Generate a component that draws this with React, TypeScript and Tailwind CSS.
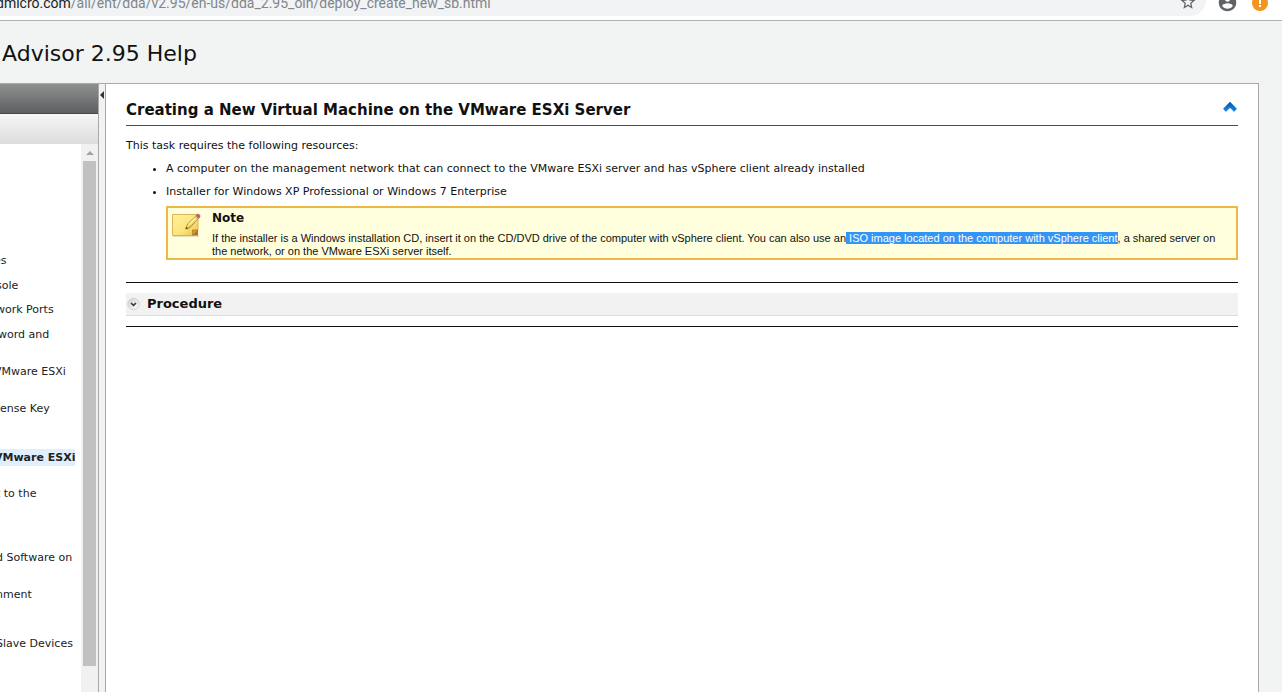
type Topic = { label: string; row: string; current?: boolean };

const topics: Topic[] = [
  { label: 'es', row: 'h-[25px] -ml-1.5' },
  { label: 'sole', row: 'h-[24px] -ml-1' },
  { label: 'work Ports', row: 'h-[25px] -ml-1' },
  { label: 'word and', row: 'h-[37px] -ml-0.5' },
  { label: 'VMware ESXi', row: 'h-[37px] -ml-1.5' },
  { label: 'ense Key', row: 'h-[49px]' },
  { label: 'VMware ESXi', row: 'h-[36px] -ml-1.5', current: true },
  { label: 't to the', row: 'h-[64px] -ml-1' },
  { label: 'd Software on', row: 'h-[37px] -ml-1' },
  { label: 'nment', row: 'h-[49px] -ml-1' },
  { label: 'Slave Devices', row: 'h-[25px] -ml-1' },
];

function StarIcon() {
  return (
    <svg width="18" height="18" viewBox="0 0 24 24" fill="#5f6368" aria-hidden="true">
      <path d="M22 9.24l-7.19-.62L12 2 9.19 8.63 2 9.24l5.46 4.73L5.82 21 12 17.27 18.18 21l-1.63-7.03L22 9.24zM12 15.4l-3.76 2.27 1-4.28-3.32-2.88 4.38-.38L12 6.1l1.71 4.04 4.38.38-3.32 2.88 1 4.28L12 15.4z" />
    </svg>
  );
}

function AccountIcon() {
  return (
    <svg width="21" height="21" viewBox="0 0 24 24" fill="#5f6368" aria-hidden="true">
      <path d="M12 2C6.48 2 2 6.48 2 12s4.48 10 10 10 10-4.48 10-10S17.52 2 12 2zm0 3c1.66 0 3 1.34 3 3s-1.34 3-3 3-3-1.34-3-3 1.34-3 3-3zm0 14.2c-2.5 0-4.71-1.28-6-3.22.03-1.99 4-3.08 6-3.08 1.99 0 5.97 1.09 6 3.08-1.29 1.94-3.5 3.22-6 3.22z" />
    </svg>
  );
}

function AlertIcon() {
  return (
    <svg width="16" height="16" viewBox="0 0 16 16" aria-hidden="true">
      <circle cx="8" cy="8" r="8" fill="#f29420" />
      <path d="M7 3h2v6H7zM7 10h2v2H7z" fill="#fff" />
    </svg>
  );
}

function NoteIcon() {
  return (
    <svg width="30" height="26" viewBox="0 0 30 26" aria-hidden="true">
      <defs>
        <linearGradient id="paper" x1="0" y1="0" x2="1" y2="1">
          <stop offset="0" stopColor="#fff2a0" />
          <stop offset="0.6" stopColor="#fbe477" />
          <stop offset="1" stopColor="#e9bd4c" />
        </linearGradient>
      </defs>
      <path d="M1 24h26" stroke="#a89a70" strokeOpacity="0.6" />
      <path d="M0.500 2.500h25.500v15.500l-5.500 5.500H0.500z" fill="url(#paper)" stroke="#dcb358" />
      <path d="M26 18l-5.500 5.500h5.500z" fill="#a87424" />
      <path d="M20.500 23.500v-5.500h5.500z" fill="#d89c35" stroke="#9c6a1f" strokeWidth="0.6" />
      <path d="M15 17.500l8-7.500" stroke="#b99a52" strokeWidth="2" strokeOpacity="0.6" />
      <path d="M13.500 17l2-5 8.500-8.200 2.700 2.600-8.300 8.300z" fill="#f8d860" stroke="#8f7436" strokeWidth="0.6" />
      <path d="M17 12.500l8-8" stroke="#fff4b4" strokeWidth="1.100" />
      <path d="M13.500 17l0.800-2.200 1.400 1.400z" fill="#4a4030" />
      <path d="M22.700 5l1.300-1.300 2.700 2.600-1.200 1.200z" fill="#b4b9be" />
      <path d="M24 3.600c1-1.500 2.400-1.700 3.400-.8 1 1 .8 2.300-.6 3.400z" fill="#e05560" stroke="#b8404c" strokeWidth="0.6" />
    </svg>
  );
}

function TopIcon() {
  return (
    <svg width="16" height="12" viewBox="0 0 16 12" aria-hidden="true">
      <defs>
        <linearGradient id="up" x1="0" y1="0" x2="0" y2="1">
          <stop offset="0" stopColor="#0b4fae" />
          <stop offset="1" stopColor="#0090f8" />
        </linearGradient>
      </defs>
      <path d="M8 1l6.500 6.800-2.300 2.600L8 6.500l-4.200 3.900-2.300-2.600z" fill="url(#up)" stroke="#1a62b0" strokeWidth="0.6" />
    </svg>
  );
}

function ExpandIcon() {
  return (
    <svg width="14" height="14" viewBox="0 0 14 14" aria-hidden="true">
      <defs>
        <linearGradient id="knob" x1="0" y1="0" x2="1" y2="1">
          <stop offset="0" stopColor="#d0d0d0" />
          <stop offset="1" stopColor="#ffffff" />
        </linearGradient>
      </defs>
      <circle cx="7.500" cy="7" r="5.700" fill="url(#knob)" stroke="#d2d2d2" />
      <path d="M5 6l2.500 2.300L10 6" fill="none" stroke="#3a3a3a" strokeWidth="1.600" />
    </svg>
  );
}

export default function App() {
  return (
    <div className="flex h-screen flex-col overflow-hidden bg-[#f2f4f3] font-['DejaVu_Sans',Verdana,sans-serif] text-[11px] text-[#111111]">
      <div className="flex h-[21px] shrink-0 items-start border-b border-[#b1b3b2] bg-white">
        <div className="flex h-4 min-w-0 flex-1 items-center justify-between rounded-br-2xl bg-[#f1f3f4] pr-[9px]">
          <div className="-ml-1 -mt-2.5 whitespace-nowrap font-[Roboto,sans-serif] text-[14px] leading-5 text-[#80868b]">
            <span className="text-[#202124]">dmicro.com</span>/all/ent/dda/v2.95/en-us/dda_2.95_olh/deploy_create_new_sb.html
          </div>
          <button type="button" aria-label="Bookmark this page" className="-mt-3">
            <StarIcon />
          </button>
        </div>
        <div className="-mt-2 flex items-center gap-[14px] pl-[11px] pr-[14px]">
          <button type="button" aria-label="Profile">
            <AccountIcon />
          </button>
          <button type="button" aria-label="Update available">
            <AlertIcon />
          </button>
        </div>
      </div>

      <header className="flex h-[62px] shrink-0 items-center pl-0.5 pt-1">
        <div className="text-[22px] leading-8">Advisor 2.95 Help</div>
      </header>

      <div className="mr-[23px] flex min-h-0 flex-1 border-r border-t border-[#a9a9a9]">
        <aside className="flex w-[99px] shrink-0 flex-col overflow-hidden border-r border-[#a9a9a9] bg-white">
          <div className="h-[30px] shrink-0 border-b border-[#44474d] bg-linear-to-b from-[#8f8f8f] to-[#5c6064]" />
          <div className="h-[30px] shrink-0 bg-linear-to-b from-[#f6f6f6] to-[#dcdcdc]" />
          <div className="flex min-h-0 flex-1">
            <nav className="min-w-0 flex-1 overflow-hidden pt-[108px]">
              <ul>
                {topics.map((topic, i) => (
                  <li key={i} className={`whitespace-nowrap leading-[17px] ${topic.row}`}>
                    <a
                      href="#topic"
                      className={topic.current ? 'inline-block bg-[#dfeffd] font-bold text-[#222222]' : 'inline-block text-[#222222]'}
                    >
                      {topic.label}
                    </a>
                  </li>
                ))}
              </ul>
            </nav>
            <div className="flex w-[17px] shrink-0 flex-col items-center bg-[#f1f1f1] pb-[26px]">
              <div className="flex h-[17px] shrink-0 items-center">
                <svg width="8" height="4" viewBox="0 0 8 4" aria-hidden="true">
                  <path d="M0 4l4-4 4 4z" fill="#a3a3a3" />
                </svg>
              </div>
              <div className="w-[13px] flex-1 bg-[#c1c1c1]" />
            </div>
          </div>
        </aside>

        <div className="w-[6px] shrink-0 bg-[#f2f2f2] pt-[7px]">
          <button type="button" aria-label="Hide contents" className="block">
            <svg width="6" height="8" viewBox="0 0 6 8" aria-hidden="true">
              <path d="M5 0v8L1 4z" fill="#333" />
            </svg>
          </button>
        </div>

        <main className="min-w-0 flex-1 border-l border-[#a9a9a9] bg-white px-5">
          <div className="flex h-[42px] items-end justify-between border-b border-[#ff0000] pb-[5px]">
            <h1 className="text-[15px] font-bold leading-5">Creating a New Virtual Machine on the VMware ESXi Server</h1>
            <a href="#top" aria-label="Back to top" className="block pb-[7px]">
              <TopIcon />
            </a>
          </div>
          <p className="mt-3 leading-4">This task requires the following resources:</p>
          <ul className="mt-[7px] list-disc pl-10 leading-4">
            <li>A computer on the management network that can connect to the VMware ESXi server and has vSphere client already installed</li>
            <li className="mt-[7px]">Installer for Windows XP Professional or Windows 7 Enterprise</li>
          </ul>
          <div className="ml-10 mt-[6px] flex border-2 border-[#ebb944] bg-[#ffffdd] pl-1 pr-[18px]">
            <div className="w-10 shrink-0 pt-1">
              <NoteIcon />
            </div>
            <div className="min-w-0 flex-1">
              <h2 className="text-[12px] font-bold leading-5">Note</h2>
              <p className="mt-1 font-['Liberation_Sans',Arial,sans-serif] text-[11px] leading-[13px]">
                If the installer is a Windows installation CD, insert it on the CD/DVD drive of the computer with vSphere client. You can also use an
                <mark className="bg-[#3395f5] text-white"> ISO image located on the computer with vSphere client</mark>, a shared server on the network, or on the VMware ESXi server itself.
              </p>
            </div>
          </div>
          <section className="mt-[22px] border-y border-[#111111] py-[10px]">
            <button type="button" className="flex h-[23px] w-full items-center gap-[7px] border-b border-[#dddddd] bg-[#f2f2f2] text-left text-[13px] font-bold">
              <ExpandIcon />
              Procedure
            </button>
          </section>
        </main>
      </div>
    </div>
  );
}
